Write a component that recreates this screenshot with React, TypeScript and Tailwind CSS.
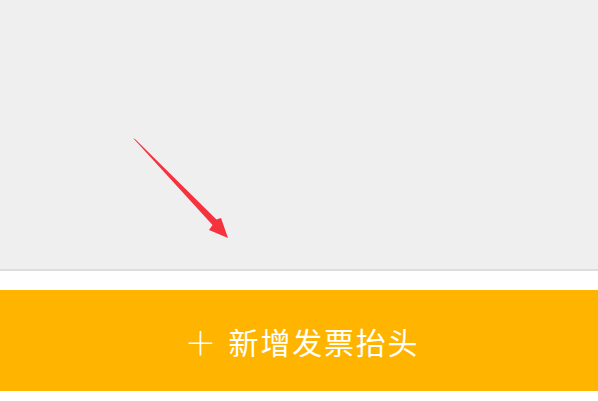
export default function App() {
  return (
    <div className="w-[598px] h-[401px] bg-white flex flex-col overflow-hidden font-['Noto_Sans_CJK_SC','Noto_Sans',sans-serif]">
      {/* empty list area */}
      <div className="relative h-[271px] shrink-0 bg-[#efefef] border-b-2 border-[#dddddd]">
        <svg className="absolute left-0 top-0" width="598" height="269" viewBox="0 0 598 269">
          <polygon
            points="133,138 135.5,139.5 216.5,219.5 221,218 228,238 209,230 212.5,225"
            fill="#f5333f"
          />
        </svg>
      </div>
      <div className="h-[19px] shrink-0" />
      {/* add button */}
      <button className="h-[101px] shrink-0 bg-[#ffb400] flex items-center justify-center gap-3 pl-[6px] text-white">
        <span className="text-[32px] font-extralight leading-none">＋</span>
        <span className="text-[30px] tracking-[1.8px] leading-none">新增发票抬头</span>
      </button>
    </div>
  );
}
